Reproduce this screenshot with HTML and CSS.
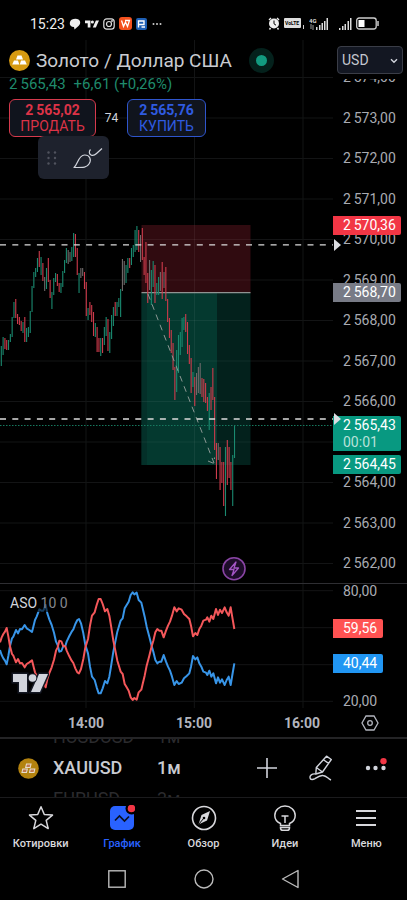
FILE: index.html
```html
<!DOCTYPE html>
<html lang="ru">
<head>
    <meta charset="UTF-8">
    <meta name="viewport" content="width=device-width, initial-scale=1.0">
    <title>XAUUSD</title>
    <link rel="stylesheet" href="styles.css">
</head>
<body>
    <div class="status-bar">
        <div class="status-left">
            <span class="clock">15:23</span>
            <svg width="12" height="12" viewBox="0 0 12 12"><path d="M3 1.500C5 .5 8 .5 9.500 1.500 12 3 11.500 6.500 9.500 8L5.500 11.500 5 9C2 9 .5 7 .8 5 1 3 2 2 3 1.500z" fill="#eee"/></svg>
            <svg width="14" height="10" viewBox="0 0 36 20"><path d="M0 1h14v18H7V8H0zM28 1h8l-8 18h-8z" fill="#eee"/><circle cx="19" cy="5" r="4" fill="#eee"/></svg>
            <svg width="12" height="12" viewBox="0 0 12 12" fill="none" stroke="#ddd" stroke-width="1.200"><rect x=".8" y=".8" width="10.400" height="10.400" rx="3"/><circle cx="6" cy="6" r="2.500"/><circle cx="9" cy="3" r=".4"/></svg>
            <svg width="13" height="13" viewBox="0 0 13 13"><rect width="13" height="13" rx="3" fill="#f4511e"/><path d="M2.500 3.500l2 6 2-4.500 2 4.500 2-6H6" fill="none" stroke="#fff" stroke-width="1.300"/></svg>
            <svg width="11" height="12" viewBox="0 0 11 12"><rect width="11" height="12" rx="2" fill="#1e5fb4"/><path d="M2.500 9.500V3h5.500v3.500H2.500M5.500 9H9" fill="none" stroke="#fff" stroke-width="1.400"/></svg>
            <svg width="12" height="12" viewBox="0 0 12 12" fill="#ccc"><circle cx="2.500" cy="6" r="1"/><circle cx="6" cy="6" r="1"/><circle cx="9.500" cy="6" r="1"/></svg>
        </div>
        <div class="status-right">
            <svg width="12" height="13" viewBox="0 0 12 13"><circle cx="6" cy="6.500" r="5" fill="#eee"/><path d="M1 3l2-2M11 3L9 1M2.500 11L1.500 12.500M9.500 11l1 1.500" stroke="#eee" stroke-width="1.400"/><path d="M6 3.500v3.300l2 1.400" fill="none" stroke="#000"/></svg>
            <svg width="21" height="13" viewBox="0 0 21 13"><rect y="1" width="17" height="10" rx="1" fill="#ddd"/><text x="1" y="8" class="volte">VoLTE</text><path d="M19.500 8v4" stroke="#ccc"/></svg>
            <svg width="20" height="14" viewBox="0 0 20 14" fill="#ddd"><text x="0" y="6" class="net">4G</text><path d="M2 7v5M4 8v5" stroke="#999"/><path d="M7 10h1.500v3H7zM10 8h1.500v5H10zM12.500 6H14v7h-1.500zM15 4h1.500v9H15zM17.500 1H19v12h-1.500z"/></svg>
            <svg class="second-sim" width="13" height="14" viewBox="0 0 13 14" fill="#ddd"><path d="M0 11h1.500v2H0zM3 9h1.500v4H3zM5.500 7H7v6H5.500zM8.500 4H10v9H8.500zM11 1h1.500v12H11z"/></svg>
            <svg width="23" height="13" viewBox="0 0 23 13"><rect x=".7" y="1" width="19.500" height="11" rx="2.500" fill="none" stroke="#ccc" stroke-width="1.300"/><rect x="2.500" y="3" width="6" height="7" fill="#fff"/><path d="M22 4v5" stroke="#ccc" stroke-width="1.500"/></svg>
        </div>
    </div>

    <main class="pane price-pane">
        <svg class="plot" viewBox="0 40 333 543" preserveAspectRatio="none">
            <g id="price-grid" class="grid"></g>
            <!-- short position: risk above the entry, reward below -->
            <rect x="141.500" y="225" width="109" height="68" fill="#300b10"/>
            <rect x="141.500" y="293" width="109" height="172" fill="#03211c"/>
            <rect x="141.500" y="293" width="75.500" height="172" fill="#043029"/>
            <rect x="147" y="293" width="70" height="172" fill="#04392f"/>
            <g id="price-grid-top" class="grid grid-over"></g>
            <path d="M141.500 292.700h109" stroke="#8f9492" stroke-width="1.200"/>
            <g id="candles"></g>
            <path d="M148 294L214 463M208 461l6 2.500.5-6" class="trend"/>
            <path d="M0 244.800h333M0 419h333" class="level"/>
            <path d="M0 425.500h333" class="last-price"/>
            <circle cx="234" cy="568.700" r="11" fill="#1d0c29" stroke="#8a45a5" stroke-width="1.600"/>
            <path d="M236 562l-6.500 7.500h4.500l-2 6 6.500-7.500h-4.500z" fill="none" stroke="#a355c4" stroke-width="1.300" stroke-linejoin="round"/>
        </svg>

        <div class="price-axis">
            <div class="currency">
                <select aria-label="Валюта">
                    <option>USD</option>
                </select>
                <svg width="8" height="6" viewBox="0 0 8 6" fill="none" stroke="#d1d4dc" stroke-width="1.400"><path d="M1 1.200l3 3 3-3"/></svg>
            </div>
            <div class="ticks">
                <span>2&#8201;574,00</span>
                <span>2&#8201;573,00</span>
                <span>2&#8201;572,00</span>
                <span>2&#8201;571,00</span>
                <span>2&#8201;570,00</span>
                <span>2&#8201;569,00</span>
                <span>2&#8201;568,00</span>
                <span>2&#8201;567,00</span>
                <span>2&#8201;566,00</span>
                <span>&nbsp;</span>
                <span>2&#8201;564,00</span>
                <span>2&#8201;563,00</span>
                <span>2&#8201;562,00</span>
            </div>
            <div class="tag tag-stop">2&#8201;570,36</div>
            <div class="tag tag-entry">2&#8201;568,70</div>
            <div class="tag tag-last">2&#8201;565,43<br><span class="countdown">00:01</span></div>
            <div class="tag tag-target">2&#8201;564,45</div>
            <i class="marker marker-high"></i>
            <i class="marker marker-low"></i>
        </div>

        <header class="legend">
            <div class="title-row">
                <svg width="21" height="21" viewBox="0 0 21 21"><circle cx="10.500" cy="10.500" r="10.500" fill="#d69a11"/><path d="M8.500 5.500h4l1.500 4H7zM5 10.500h4l1.300 4H3.200zM12 10.500h4l1.800 4h-7z" fill="#fff"/></svg>
                <h1>Золото / Доллар США</h1>
                <span class="market-open"></span>
            </div>
            <div class="change"><span>2&#8201;565,43</span><span>+6,61 (+0,26%)</span></div>
            <div class="trade-row">
                <button type="button" class="trade sell"><b>2&#8201;565,02</b>ПРОДАТЬ</button>
                <span class="spread">74</span>
                <button type="button" class="trade buy"><b>2&#8201;565,76</b>КУПИТЬ</button>
            </div>
        </header>

        <div class="toolbox">
            <svg width="10" height="14" viewBox="0 0 10 14" fill="#50535e"><circle cx="1.500" cy="1.500" r="1.200"/><circle cx="8" cy="1.500" r="1.200"/><circle cx="1.500" cy="7" r="1.200"/><circle cx="8" cy="7" r="1.200"/><circle cx="1.500" cy="12.500" r="1.200"/><circle cx="8" cy="12.500" r="1.200"/></svg>
            <button type="button" class="tool" aria-label="Кисть">
                <svg width="30" height="22" viewBox="0 0 30 22" fill="none" stroke="#d1d4dc" stroke-width="1.200" stroke-linejoin="round"><path d="M1 20.500C5 17.500 5 8.500 11.500 8c5-.2 7.500 4.500 4.500 9-2 3.500-5 3.500-15 3.500z"/><path d="M17.500 2.500c-1.800 2-1.500 4.500.5 5.500s4 0 5.500-1.500L29 1.500"/></svg>
            </button>
        </div>
    </main>

    <section class="pane indicator-pane">
        <svg class="plot" viewBox="0 42 999 372" preserveAspectRatio="none">
            <path class="grid grid-wide" d="M0 62h999M0 173h999M0 284h999M0 394h999M258 42v372M583 42v372M909 42v372"/>
            <polyline id="aso-bulls" class="aso aso-blue"/>
            <polyline id="aso-bears" class="aso aso-red"/>
        </svg>
        <div class="price-axis">
            <div class="ticks ticks-aso">
                <span>80,00</span>
                <span>20,00</span>
            </div>
            <div class="tag tag-bears">59,56</div>
            <div class="tag tag-bulls">40,44</div>
        </div>
        <div class="indicator-name">ASO <span>10 0</span></div>
        <svg class="tv-logo" width="38" height="22" viewBox="0 0 38 22"><path d="M2 2h14v18H8V10H2zM28 2h9l-8 18h-9z" fill="#d1d4dc" stroke="#131722" stroke-width="3" paint-order="stroke"/><circle cx="21.500" cy="6" r="3.800" fill="#d1d4dc" stroke="#131722" stroke-width="2" paint-order="stroke"/></svg>
    </section>

    <div class="time-axis">
        <span>14:00</span>
        <span>15:00</span>
        <span>16:00</span>
        <button type="button" class="axis-settings" aria-label="Настройки">
            <svg width="18" height="18" viewBox="0 0 18 18" fill="none" stroke="#b2b5be" stroke-width="1.300"><path d="M5 2h8l4 7-4 7H5L1 9z"/><circle cx="9" cy="9" r="2.300"/></svg>
        </button>
    </div>

    <div class="symbol-bar">
        <svg width="21" height="21" viewBox="0 0 21 21"><circle cx="10.500" cy="10.500" r="10.300" fill="#b3820f"/><path d="M8.500 6h4.500l-.8 3.500H7.700zM4.800 11h4.500l-.8 3.500H4zM12.300 11h4.500l-.8 3.500h-4.500z" fill="#c07a50" stroke="#e6dccb" stroke-width="1.100"/></svg>
        <div class="wheel wheel-symbol">
            <span class="ghost">HUSDUSD</span>
            <strong>XAUUSD</strong>
            <span class="ghost">EURUSD</span>
        </div>
        <div class="wheel">
            <span class="ghost">1м</span>
            <strong>1м</strong>
            <span class="ghost">3м</span>
        </div>
        <div class="actions">
            <button type="button" aria-label="Добавить"><svg width="20" height="20" viewBox="0 0 20 20" stroke="#d1d4dc" stroke-width="1.600"><path d="M10 0v20M0 10h20"/></svg></button>
            <button type="button" aria-label="Рисование"><svg width="26" height="26" viewBox="0 0 26 26" fill="none" stroke="#d1d4dc" stroke-width="1.400" stroke-linejoin="round"><path d="M18.500 1.200l4.800 3.300-8.800 12.500-6.700 2 .5-6.500zM15.800 5l4.800 3.300M8.300 12.500l6.200 4.500"/><path d="M7.500 19C4 18.500 1.500 20.500 2 22.800s3 2 5 .8c3-2 5-3.600 8-3.100 4 .5 4.500 3 8 4.500"/></svg></button>
            <button type="button" aria-label="Ещё"><svg width="22" height="20" viewBox="0 0 22 20" fill="#d1d4dc"><circle cx="3" cy="10" r="2.200"/><circle cx="10.500" cy="10" r="2.200"/><circle cx="18.500" cy="10" r="2.200"/><circle cx="18.500" cy="3.200" r="3.200" fill="#f23645"/></svg></button>
        </div>
    </div>

    <nav class="tabs">
        <a href="#">
            <svg width="26" height="26" viewBox="0 0 26 26" fill="none" stroke="#d8d8dc" stroke-width="1.500" stroke-linejoin="round"><path d="M13 1.800l3.300 7.700 8.200.6-6.300 5.300 2 8.200-7.200-4.400-7.200 4.400 2-8.200L1.500 10.100l8.200-.6z"/></svg>
            Котировки
        </a>
        <a href="#" class="active">
            <svg width="26" height="26" viewBox="0 0 26 26"><rect x="1" y="1" width="24" height="24" rx="5" fill="#2962ff"/><path d="M6 15.500l4.500-4.500 5 5 4.500-4.500" fill="none" stroke="#0a0f20" stroke-width="1.700"/><circle cx="22.500" cy="3.500" r="6" fill="#000"/><circle cx="22.500" cy="3.500" r="3.800" fill="#f23645"/></svg>
            График
        </a>
        <a href="#">
            <svg width="26" height="26" viewBox="0 0 26 26"><circle cx="13" cy="13" r="11.500" fill="none" stroke="#d8d8dc" stroke-width="1.600"/><path d="M19 6l-3 9.500-8.500 4 3-9.500z" fill="#d8d8dc"/><path d="M7.500 19.500l5.500-6.500" stroke="#000"/><circle cx="13" cy="13" r="1.300" fill="#000"/></svg>
            Обзор
        </a>
        <a href="#">
            <svg width="26" height="26" viewBox="0 0 26 26" fill="none" stroke="#d8d8dc" stroke-width="1.500"><path d="M8.500 20.500v-2C5 17 2.800 14 2.800 10.500 2.800 5 7.500 1 13 1s10.200 4 10.200 9.500c0 3.500-2.200 6.500-5.700 8v2zM13 18v-7M9.500 11h7M8.500 22.500c0 2 .8 2.800 2 2.800h5c1.200 0 2-.8 2-2.800z"/></svg>
            Идеи
        </a>
        <a href="#">
            <svg width="26" height="26" viewBox="0 0 26 26" stroke="#d8d8dc" stroke-width="1.800"><path d="M3 6h20M3 13h20M3 20h20"/></svg>
            Меню
        </a>
    </nav>

    <div class="system-nav">
        <button type="button" aria-label="Недавние"><svg width="20" height="20" viewBox="0 0 20 20" fill="none" stroke="#bbb" stroke-width="1.400"><rect x="1.800" y="1.800" width="16.400" height="16.400"/></svg></button>
        <button type="button" aria-label="Домой"><svg width="20" height="20" viewBox="0 0 20 20" fill="none" stroke="#bbb" stroke-width="1.400"><circle cx="10" cy="10" r="9"/></svg></button>
        <button type="button" aria-label="Назад"><svg width="20" height="20" viewBox="0 0 20 20" fill="none" stroke="#bbb" stroke-width="1.400" stroke-linejoin="round"><path d="M17 1.500v17L1.500 10z"/></svg></button>
    </div>

    <script src="chart.js"></script>
</body>
</html>
```
FILE: styles.css
```css
* {
    box-sizing: border-box;
}
body {
    margin: 0;
    background: #000;
    color: #d1d4dc;
    font-family: Roboto, "Liberation Sans", sans-serif;
    font-size: 14px;
}
svg {
    display: block;
    flex-shrink: 0;
}
button {
    font-family: inherit;
    background: none;
    border: none;
    padding: 0;
    color: inherit;
    cursor: pointer;
}

/* Status bar */
.status-bar {
    display: flex;
    justify-content: space-between;
    height: 40px;
    padding: 7px 28px 0 30px;
}
.status-left,
.status-right {
    display: flex;
    align-items: center;
    gap: 4px;
}
.clock {
    font-size: 14px;
    color: #eee;
}
.volte {
    font-size: 5px;
    font-weight: 700;
    fill: #000;
}
.net {
    font-size: 6px;
    font-weight: 700;
}
.second-sim {
    margin-left: 6px;
}

/* Chart panes */
.pane {
    position: relative;
    display: grid;
    grid-template-columns: 1fr 74px;
    border-bottom: 1px solid #2e2e32;
}
.price-pane {
    height: 544px;
}
.indicator-pane {
    height: 124px;
    border-bottom: none;
}
.plot {
    width: 100%;
    height: 100%;
}
.grid {
    fill: none;
    stroke: #131415;
    stroke-width: 1;
}
.grid-over {
    stroke: rgba(255, 255, 255, 0.06);
}
.grid-wide {
    stroke-width: 3;
}
.level {
    fill: none;
    stroke: #dcdcdc;
    stroke-width: 1.3;
    stroke-dasharray: 6 6.3;
}
.last-price {
    fill: none;
    stroke: #16795f;
    stroke-width: 1;
    stroke-dasharray: 1.5 1.5;
}
.trend {
    fill: none;
    stroke: #8b9894;
    stroke-width: 1;
    stroke-dasharray: 6 5;
}
.aso {
    fill: none;
    stroke-width: 6;
    stroke-linejoin: round;
}
.aso-blue {
    stroke: #3895e8;
}
.aso-red {
    stroke: #f4575a;
}

/* Price scale */
.price-axis {
    position: relative;
}
.ticks {
    display: flex;
    flex-direction: column;
    justify-content: space-between;
    height: 100%;
    padding: 29px 0 12px 10px;
    line-height: 16px;
    color: #a9abb2;
}
.ticks-aso {
    padding: 0 0 0 10px;
    line-height: 14px;
}
.currency {
    position: absolute;
    top: 0;
    left: 0;
    width: 100%;
    height: 39px;
    padding: 6px 4px 0 4px;
    background: #000;
}
.currency select {
    appearance: none;
    display: block;
    width: 100%;
    height: 28px;
    padding: 0 4px;
    background: #131722;
    border: 1px solid #3a3d47;
    border-radius: 4px;
    color: #c4c7cf;
    font-family: inherit;
    font-size: 14px;
}
.currency svg {
    position: absolute;
    top: 18px;
    right: 9px;
    pointer-events: none;
}
.tag {
    position: absolute;
    left: 0;
    width: 68px;
    padding-left: 10px;
    border-radius: 0 2px 2px 0;
    line-height: 19px;
    color: #fff;
}
.tag-stop {
    top: 176px;
    background: #f23645;
}
.tag-entry {
    top: 243px;
    background: #787b86;
}
.tag-last {
    top: 376px;
    padding-top: 1px;
    background: #089981;
    line-height: 17px;
}
.countdown {
    color: #b9e2da;
}
.tag-target {
    top: 415px;
    background: #089981;
}
.tag-bears,
.tag-bulls {
    width: 50px;
}
.tag-bears {
    top: 35px;
    background: #ff5252;
}
.tag-bulls {
    top: 70px;
    background: #2196f3;
}
.marker {
    position: absolute;
    left: 1px;
    border: 6px solid transparent;
    border-left: 7px solid #dcdde2;
    border-right: none;
}
.marker-high {
    top: 199px;
}
.marker-low {
    top: 373px;
}

/* Legend over the chart */
.legend {
    position: absolute;
    top: 8px;
    left: 9px;
}
.title-row {
    display: flex;
    align-items: center;
    height: 24px;
}
.title-row h1 {
    margin: 0 17px 0 6px;
    font-size: 19px;
    font-weight: 400;
    color: #c9cbd1;
}
.market-open {
    width: 25px;
    height: 25px;
    border: 7px solid #04211c;
    border-radius: 50%;
    background: #129a80;
}
.change {
    display: flex;
    gap: 8px;
    margin-top: 2px;
    font-size: 15px;
    line-height: 20px;
    color: #1f8a6c;
}
.trade-row {
    display: flex;
    align-items: center;
    margin-top: 5px;
}
.trade {
    width: 87px;
    height: 38px;
    border: 1px solid;
    border-radius: 6px;
    background: #10141d;
    font-size: 14px;
    line-height: 16px;
}
.trade b {
    display: block;
}
.sell {
    border-color: #d63a4d;
    color: #dc3347;
}
.buy {
    width: 79px;
    border-color: #2f55cc;
    color: #2f5be0;
}
.spread {
    width: 31px;
    text-align: center;
    font-size: 12px;
}
.toolbox {
    position: absolute;
    top: 96px;
    left: 38px;
    display: flex;
    align-items: center;
    gap: 16px;
    height: 43px;
    padding: 0 6px 0 9px;
    border-radius: 6px;
    background: #1e222d;
}

/* Indicator */
.indicator-name {
    position: absolute;
    top: 10px;
    left: 8px;
    padding: 0 2px;
    background: rgba(0, 0, 0, 0.6);
    line-height: 18px;
}
.indicator-name span {
    color: #85878e;
}
.tv-logo {
    position: absolute;
    bottom: 14px;
    left: 11px;
}
.time-axis {
    display: flex;
    align-items: center;
    height: 31px;
    padding: 0 28px 0 32px;
    border-bottom: 2px solid #242426;
    font-weight: 700;
    color: #b2b5be;
}
.time-axis span {
    width: 108px;
    text-align: center;
}
.axis-settings {
    margin-left: auto;
}

/* Symbol bar */
.symbol-bar {
    display: flex;
    align-items: center;
    height: 59px;
    padding: 0 20px 0 18px;
    border-bottom: 1px solid #1b1b1d;
    overflow: hidden;
}
.wheel {
    display: flex;
    flex-direction: column;
    gap: 9px;
    font-size: 18px;
    line-height: 22px;
}
.wheel-symbol {
    width: 104px;
    margin-left: 14px;
}
.wheel strong {
    font-weight: 500;
    color: #c9cbd1;
}
.ghost {
    color: #2b2b2e;
}
.actions {
    display: flex;
    align-items: center;
    gap: 31px;
    margin-left: auto;
}

/* Tabs */
.tabs {
    display: flex;
    height: 60px;
    padding-top: 7px;
}
.tabs a {
    flex: 1;
    display: flex;
    flex-direction: column;
    align-items: center;
    gap: 6px;
    font-size: 11px;
    font-weight: 500;
    line-height: 14px;
    color: #d8d8dc;
    text-decoration: none;
}
.tabs .active {
    color: #2962ff;
}
.system-nav {
    display: flex;
    justify-content: center;
    height: 41px;
}
.system-nav button {
    display: flex;
    align-items: center;
    justify-content: center;
    width: 87px;
}
```
FILE: chart.js
```javascript
const SVG = "http://www.w3.org/2000/svg";
const COLORS = { g: "#1a8a70", r: "#cf3b4c", n: "#6f6a6a" };

// one-minute bars: top, bottom, colour
const bars = `346 366 g,337 355 g,338 349 r,340 350 r,340 350 g,334 342 g,317 337 g,302 318 g,299 318 r,314 324 r,
317 325 r,321 331 r,322 333 g,317 342 r,328 342 g,327 337 g,311 333 g,286 312 g,272 288 g,268 277 g,
258 272 g,251 267 r,257 275 g,263 281 r,277 291 n,268 289 g,258 282 r,280 298 r,292 309 g,278 295 g,
273 282 g,274 286 r,283 292 r,283 293 g,271 287 g,260 273 g,248 263 g,250 264 n,252 262 n,247 261 g,
233 257 g,234 257 r,248 275 r,273 293 g,268 278 n,268 276 n,272 289 r,282 316 r,308 320 g,302 315 r,
305 322 r,312 336 r,323 337 g,327 352 r,338 352 r,338 356 g,338 353 r,327 345 g,317 336 g,319 351 r,
332 353 g,315 339 g,307 326 g,302 316 r,302 316 g,298 307 g,289 317 g,259 291 n,261 285 n,265 283 g,
258 273 g,258 268 r,248 265 g,245 257 g,230 252 g,226 250 g,230 252 r,235 262 n,228 260 r,257 275 r,
242 283 r,273 303 r,260 290 n,270 305 g,261 287 g,265 303 r,283 295 g,277 295 g,272 291 n,262 299 r,
272 288 n,267 301 r,299 322 r,318 338 r,330 353 r,343 370 r,367 400 r,350 392 g,335 373 g,332 355 g,
318 347 g,317 330 g,314 332 r,322 354 r,345 364 r,358 393 r,372 387 g,377 406 r,373 395 n,367 393 n,
363 394 n,378 397 r,379 402 r,383 403 r,397 411 r,393 430 g,387 410 r,368 400 r,397 450 r,443 479 r,
443 460 n,447 490 r,462 483 r,462 506 r,447 516 g,440 485 r,447 478 r,462 490 r,455 506 g,425 458 g`;

// blue line of the oscillator, the red one mirrors it around 50
const MID = 457;
const aso = `0,240 5,255 10,265 15,272 20,283 25,258 30,228 36,205 40,200 44,190 48,180 54,190 60,177 66,178 74,165
80,175 88,180 96,186 100,170 105,150 110,140 118,118 124,122 130,122 137,105 142,130 148,148 155,165 162,188 168,215
173,225 178,245 184,243 190,228 196,228 200,215 208,198 215,185 220,178 226,162 232,150 237,147 243,160 250,190 256,225
264,250 270,290 276,320 284,330 290,352 296,370 302,370 308,355 315,333 322,340 328,320 333,290 340,245 346,215 352,185
358,165 362,152 368,145 374,115 380,105 386,95 392,75 398,67 403,73 410,68 416,90 424,98 428,115 434,140 440,170
448,200 455,228 460,245 466,270 472,280 478,275 484,275 491,255 498,275 504,290 510,302 516,320 523,345 530,333 536,342
545,338 552,325 560,318 568,310 573,290 579,258 586,268 592,262 598,280 604,290 610,305 618,308 622,315 628,302 634,320
640,310 648,340 654,322 660,338 666,328 674,345 680,330 686,320 692,345 697,315 703,280`;

function addPath(parent, d) {
    const path = document.createElementNS(SVG, "path");
    path.setAttribute("d", d);
    parent.appendChild(path);
    return path;
}

function drawGrid() {
    const grid = document.getElementById("price-grid");
    const over = document.getElementById("price-grid-top");
    for (let i = 0; i <= 12; i++) {
        const y = 77.5 + i * 40.5;
        addPath(grid, `M0 ${y}H333`);
        if (y > 225 && y < 465) addPath(over, `M141.5 ${y}H250.5`);
    }
    [86, 194.5, 303].forEach(x => addPath(grid, `M${x} 40V583`));
    addPath(over, "M194.5 225V465");
}

function drawBars() {
    const group = document.getElementById("candles");
    bars.split(",").forEach((bar, i) => {
        const [top, bottom, color] = bar.trim().split(" ");
        const x = (1.3 + i * 1.808).toFixed(2);
        const path = addPath(group, `M${x} ${top}V${bottom}`);
        path.setAttribute("stroke", COLORS[color]);
        path.setAttribute("stroke-width", 1.1);
    });
}

function drawOscillator() {
    const points = aso.split(/\s+/).map(p => p.split(",").map(Number));
    const mirrored = points.map(([x, y]) => [x, MID - y]);
    document.getElementById("aso-bulls").setAttribute("points", points.join(" "));
    document.getElementById("aso-bears").setAttribute("points", mirrored.join(" "));
}

drawGrid();
drawBars();
drawOscillator();
```
